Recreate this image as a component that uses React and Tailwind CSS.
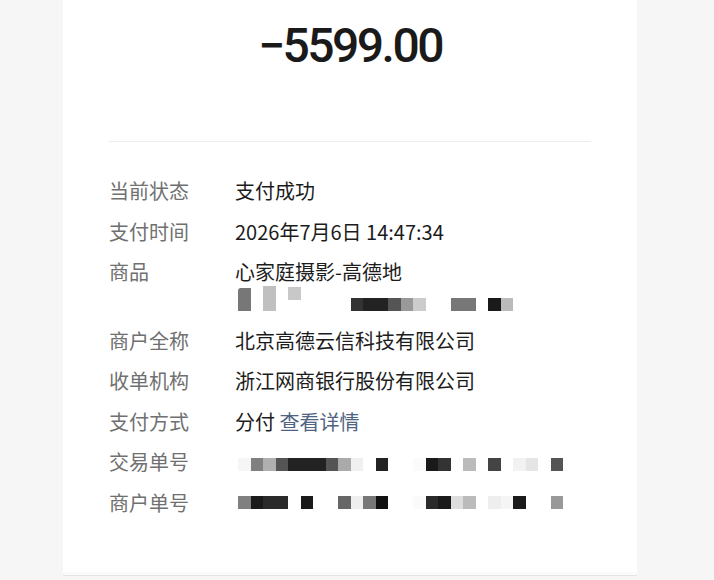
import React from "react";

// Masked values are drawn as a pixel mosaic; each entry is one 12.5px cell
const tradeNo = [
  "bg-[#f6f6f6]", "bg-[#808080]", "bg-[#b0b0b0]", "bg-[#555555]", "bg-[#222222]", "bg-[#222222]",
  "bg-[#222222]", "bg-[#555555]", "bg-[#aaaaaa]", "bg-[#f0f0f0]", "", "bg-[#222222]",
  "", "", "bg-[#fbfbfb]", "bg-[#1a1a1a]", "bg-[#333333]", "", "bg-[#bbbbbb]", "",
  "bg-[#444444]", "", "bg-[#f2f2f2]", "bg-[#e5e5e5]", "", "bg-[#555555]",
];

const merchantNo = [
  "bg-[#808080]", "bg-[#1a1a1a]", "bg-[#2a2a2a]", "bg-[#2a2a2a]", "", "bg-[#1a1a1a]",
  "", "", "bg-[#666666]", "bg-[#eeeeee]", "bg-[#777777]", "bg-[#111111]",
  "", "", "bg-[#fafafa]", "bg-[#2a2a2a]", "bg-[#1a1a1a]", "bg-[#dddddd]", "bg-[#bbbbbb]", "",
  "bg-[#eeeeee]", "bg-[#f5f5f5]", "bg-[#1a1a1a]", "", "", "bg-[#999999]",
];

const goodsNote = [
  "bg-[#777777] h-[23px] rounded-tl-[3px]", "", "bg-[#c0c0c0] h-[25px]", "", "bg-[#c8c8c8] h-[13px] mb-[11px]",
  "", "", "", "", "bg-[#333333]", "bg-[#222222]", "bg-[#222222]", "bg-[#555555]", "bg-[#999999]",
  "bg-[#cccccc]", "", "", "bg-[#777777]", "bg-[#777777]", "", "bg-[#1a1a1a]", "bg-[#bbbbbb]",
];

function Mosaic({ cells, pad = "pb-[3px]" }) {
  return (
    <div className={`flex items-end h-[28px] pl-[3px] ${pad}`}>
      {cells.map((c, i) => (
        <div key={i} className={`w-[12.5px] ${c.includes("h-[") ? "" : "h-[13px]"} ${c}`} />
      ))}
    </div>
  );
}

function Row({ label, children }) {
  return (
    <div className="flex">
      <div className="w-[126px] shrink-0 text-[#707070]">{label}</div>
      <div className="flex-1 text-[#1c1c1c]">{children}</div>
    </div>
  );
}

export default function App() {
  return (
    <div
      className="min-h-[580px] bg-[#f6f6f6] overflow-hidden"
      style={{ fontFamily: '"Noto Sans CJK SC", "Noto Sans", sans-serif' }}
    >
      <div className="ml-[63px] w-[574px] h-[572px] bg-white px-[46px]">
        <div
          className="pt-[22px] text-center text-[48px] leading-[48px] font-medium tracking-[-2.5px] text-[#1a1a1a]"
          style={{ fontFamily: "Roboto, sans-serif" }}
        >
          −5599.00
        </div>

        <div className="mt-[71px] h-px bg-[#ececec]" />

        <div className="mt-[35px] flex flex-col gap-[12.5px] text-[20px] leading-[28px]">
          <Row label="当前状态">支付成功</Row>
          <Row label="支付时间">2026年7月6日 14:47:34</Row>
          <Row label="商品">
            <div>心家庭摄影-高德地</div>
            <Mosaic cells={goodsNote} />
          </Row>
          <Row label="商户全称">北京高德云信科技有限公司</Row>
          <Row label="收单机构">浙江网商银行股份有限公司</Row>
          <Row label="支付方式">
            分付 <span className="text-[#4f6382]">查看详情</span>
          </Row>
          <Row label="交易单号">
            <Mosaic cells={tradeNo} pad="pb-[5px]" />
          </Row>
          <Row label="商户单号">
            <Mosaic cells={merchantNo} pad="pb-[8px]" />
          </Row>
        </div>
      </div>
      <div className="ml-[63px] w-[574px] h-[3px] bg-[#fafafa]" />
      <div className="ml-[63px] w-[574px] h-px bg-[#e4e4e4]" />
    </div>
  );
}
